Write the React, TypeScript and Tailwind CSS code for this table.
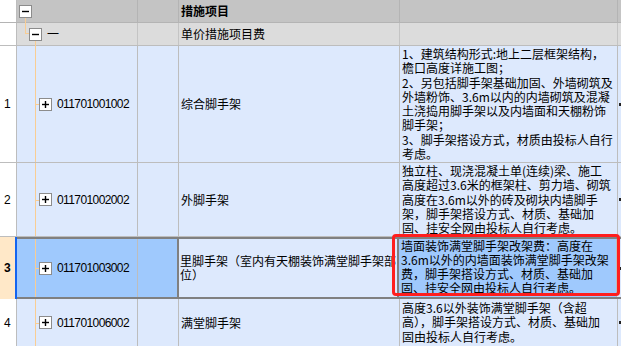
import React from 'react'

const cjk = "font-['Noto_Sans_CJK_SC','Noto_Sans_CJK_JP',sans-serif]"
const num = "font-['Liberation_Sans',sans-serif]"

function TreeBox({ sign }: { sign: '+' | '-' }) {
  return (
    <span className="relative z-10 flex h-[13px] w-[13px] shrink-0 items-center justify-center border border-[#8c8c8c] bg-white">
      <svg width="11" height="11" viewBox="0 0 11 11">
        <path d="M2 5.5H9" stroke="#000" strokeWidth="1.4" />
        {sign === '+' && <path d="M5.5 2V9" stroke="#000" strokeWidth="1.4" />}
      </svg>
    </span>
  )
}

interface RowData {
  n: string
  code: string
  name: string[]
  desc: string[]
  h: string
  descPad: string
}

const rows: RowData[] = [
  {
    n: '1',
    code: '011701001002',
    name: ['综合脚手架'],
    desc: [
      '1、建筑结构形式:地上二层框架结构，',
      '檐口高度详施工图；',
      '2、另包括脚手架基础加固、外墙砌筑及',
      '外墙粉饰、3.6m以内的内墙砌筑及混凝',
      '土浇捣用脚手架以及内墙面和天棚粉饰',
      '脚手架；',
      '3、脚手架搭设方式，材质由投标人自行',
      '考虑。',
    ],
    h: 'h-[117px]',
    descPad: 'pt-[1px]',
  },
  {
    n: '2',
    code: '011701002002',
    name: ['外脚手架'],
    desc: [
      '独立柱、现浇混凝土单(连续)梁、施工',
      '高度超过3.6米的框架柱、剪力墙、砌筑',
      '高度在3.6m以外的砖及砌块内墙脚手',
      '架，脚手架搭设方式、材质、基础加',
      '固、挂安全网由投标人自行考虑。',
    ],
    h: 'h-[74px]',
    descPad: 'pt-[1px]',
  },
]

const row4: RowData = {
  n: '4',
  code: '011701006002',
  name: ['满堂脚手架'],
  desc: ['高度3.6以外装饰满堂脚手架（含超', '高），脚手架搭设方式、材质、基础加', '固由投标人自行考虑。'],
  h: 'h-[48px]',
  descPad: 'pt-[2px]',
}

function CodeCell({ code, bg }: { code: string; bg: string }) {
  return (
    <div className={`relative flex w-[121px] shrink-0 items-center border-r border-[#bdbdbd] ${bg}`}>
      <span className="absolute left-[18px] top-0 h-full border-l border-[#f9cd93]" />
      <span className="absolute left-[18px] top-1/2 w-[4px] border-t border-[#f9cd93]" />
      <span className="ml-[22px]">
        <TreeBox sign="+" />
      </span>
      <span className={`ml-[5px] text-[12px] tracking-[-0.6px] text-black ${num}`}>{code}</span>
    </div>
  )
}

function Marker() {
  return (
    <div className="flex flex-1 items-center justify-end">
      <span className="h-[3px] w-[2px] bg-[#222]" />
    </div>
  )
}

function DataRow({ r }: { r: RowData }) {
  return (
    <div className={`flex ${r.h} border-b border-[#bdbdbd]`}>
      <div className={`flex w-[17px] shrink-0 items-center border-r border-[#bdbdbd] bg-white pl-[4px] text-[12px] ${num}`}>
        {r.n}
      </div>
      <CodeCell code={r.code} bg="bg-[#dde9fd]" />
      <div className="w-[41px] shrink-0 border-r border-[#bdbdbd] bg-[#dde9fd]" />
      <div className="flex w-[221px] shrink-0 flex-col justify-center overflow-hidden border-r border-[#bdbdbd] bg-[#dde9fd] pl-[2px] text-[12px] leading-[14px]">
        {r.name.map((t) => (
          <div key={t} className="whitespace-nowrap">
            {t}
          </div>
        ))}
      </div>
      <div className={`w-[218px] shrink-0 overflow-hidden border-r border-[#bdbdbd] bg-[#dde9fd] pl-[2px] text-[12px] leading-[14.3px] ${r.descPad}`}>
        {r.desc.map((t) => (
          <div key={t} className="whitespace-nowrap">
            {t}
          </div>
        ))}
      </div>
      <div className="flex flex-1 bg-[#dde9fd]">
        <Marker />
      </div>
    </div>
  )
}

export default function App() {
  return (
    <div className={`relative h-[346px] w-[621px] overflow-hidden bg-white text-black ${cjk}`}>
      {/* header: 措施项目 */}
      <div className="flex h-[23px] border-b border-[#b4b4b4]">
        <div className="w-[17px] shrink-0 border-r border-[#bdbdbd] bg-white" />
        <div className="relative w-[121px] shrink-0 border-r border-[#b4b4b4] bg-[#c4c4c4]">
          <span className="absolute left-[2px] top-[5px]">
            <TreeBox sign="-" />
          </span>
          <span className="absolute left-[8px] top-[17px] h-[6px] border-l border-[#f9cd93]" />
        </div>
        <div className="w-[41px] shrink-0 border-r border-[#b4b4b4] bg-[#c4c4c4]" />
        <div className="flex w-[221px] shrink-0 items-center border-r border-[#b4b4b4] bg-[#c4c4c4] pl-[2px] text-[12px] font-bold">
          措施项目
        </div>
        <div className="w-[218px] shrink-0 border-r border-[#b4b4b4] bg-[#c4c4c4]" />
        <div className="flex-1 bg-[#c4c4c4]" />
      </div>

      {/* 单价措施项目费 */}
      <div className="flex h-[23px] border-b border-[#bdbdbd]">
        <div className="w-[17px] shrink-0 border-r border-[#bdbdbd] bg-white" />
        <div className="relative flex w-[121px] shrink-0 items-center border-r border-[#c4c4c4] bg-[#dcdcdc]">
          <span className="absolute left-[8px] top-0 h-[11px] border-l border-[#f9cd93]" />
          <span className="absolute left-[8px] top-[10px] w-[4px] border-t border-[#f9cd93]" />
          <span className="absolute left-[18px] top-[16px] h-[7px] border-l border-[#f9cd93]" />
          <span className="ml-[12px]">
            <TreeBox sign="-" />
          </span>
          <span className="ml-[5px] text-[12px]">一</span>
        </div>
        <div className="w-[41px] shrink-0 border-r border-[#c4c4c4] bg-[#dcdcdc]" />
        <div className="flex w-[221px] shrink-0 items-center border-r border-[#c4c4c4] bg-[#dcdcdc] pl-[2px] text-[12px]">
          单价措施项目费
        </div>
        <div className="w-[218px] shrink-0 border-r border-[#c4c4c4] bg-[#dcdcdc]" />
        <div className="flex-1 bg-[#dcdcdc]" />
      </div>

      {rows.map((r) => (
        <DataRow key={r.n} r={r} />
      ))}

      {/* selected row 3 */}
      <div className="flex h-[62px]">
        <div className={`flex w-[17px] shrink-0 items-center border-r-2 border-[#1464f0] bg-[#ffe8c8] pl-[4px] text-[12px] font-bold ${num}`}>
          3
        </div>
        <div className="flex flex-1 border-y-2 border-[#808080]">
          <CodeCell code="011701003002" bg="bg-[#9fc9fd]" />
          <div className="w-[41px] shrink-0 border-r-2 border-[#808080] bg-[#9fc9fd]" />
          <div className="flex w-[220px] shrink-0 flex-col justify-center overflow-hidden border-r-2 border-[#808080] bg-[#dde9fd] pl-[1px] text-[12px] leading-[14px]">
            <div className="whitespace-nowrap">里脚手架（室内有天棚装饰满堂脚手架部</div>
            <div className="whitespace-nowrap">位）</div>
          </div>
          <div className="w-[218px] shrink-0 overflow-hidden border-r border-[#bdbdbd] bg-[#9fc9fd] pl-[2px] text-[12px] leading-[14px]">
            <div className="whitespace-nowrap">墙面装饰满堂脚手架改架费：高度在</div>
            <div className="whitespace-nowrap">3.6m以外的内墙面装饰满堂脚手架改架</div>
            <div className="whitespace-nowrap">费，脚手架搭设方式、材质、基础加</div>
            <div className="whitespace-nowrap">固、挂安全网由投标人自行考虑。</div>
          </div>
          <div className="flex flex-1 bg-[#dde9fd]">
            <Marker />
          </div>
        </div>
      </div>

      <DataRow r={row4} />

      {/* highlight around the description of row 3 */}
      <div className="pointer-events-none absolute left-[392px] top-[234px] h-[62px] w-[228px] rounded-[4px] border-[3px] border-[#ff1e1e]" />
    </div>
  )
}
